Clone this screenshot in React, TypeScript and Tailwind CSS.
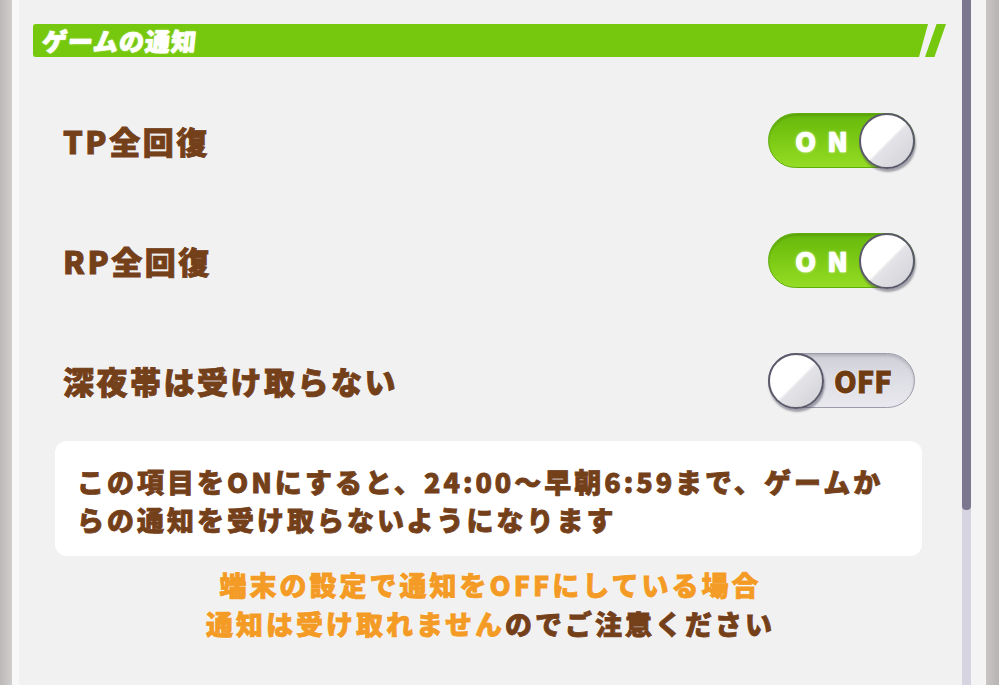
import React from 'react';

const font = { fontFamily: '"Noto Sans CJK JP", "Noto Sans", sans-serif' };

function Knob() {
  return (
    <div className="h-[56px] w-[56px] shrink-0 rounded-full border-[2px] border-[#5b5a6b] bg-[linear-gradient(135deg,#ffffff_0%,#ffffff_50%,#e4e4e8_54%,#cfcfd5_100%)] shadow-[1px_3px_2px_rgba(60,60,80,0.45)]" />
  );
}

function Toggle({ on }: { on: boolean }) {
  if (on) {
    return (
      <div className="relative h-[55px] w-[147px] rounded-full border border-[#5fae0c] bg-[linear-gradient(180deg,#66b80c_0%,#7fcc16_55%,#95dc25_100%)] shadow-[inset_0_2px_2px_rgba(0,0,0,0.12)]">
        <span className="absolute left-[26px] top-1/2 -translate-y-1/2 text-[27px] font-black leading-none tracking-[11px] text-white [-webkit-text-stroke:0.6px_#ffffff] [text-shadow:0_0_3px_#d9f7a8,0_0_1px_#c8f08a]">
          ON
        </span>
        <div className="absolute right-[-1px] top-[-1px]">
          <Knob />
        </div>
      </div>
    );
  }
  return (
    <div className="relative h-[55px] w-[147px] rounded-full border border-[#9d9cab] bg-[linear-gradient(180deg,#cfcfd8_0%,#dedee5_50%,#e8e8ee_100%)] shadow-[inset_0_2px_3px_rgba(0,0,0,0.15)]">
      <div className="absolute left-[-1px] top-[-1px]">
        <Knob />
      </div>
      <span className="absolute left-[65px] top-1/2 -translate-y-1/2 text-[29px] font-black leading-none text-[#6f3c12] [-webkit-text-stroke:0.8px_#6f3c12] [text-shadow:0_0_2px_#fff,0_0_2px_#fff,0_0_1px_#fff]">
        OFF
      </span>
    </div>
  );
}

function Row({ label, on }: { label: string; on: boolean }) {
  return (
    <div className="flex h-[120px] items-center justify-between pl-[44px] pr-[47px]">
      <span className="text-[31px] font-black leading-none tracking-[2.5px] text-[#74401a] [-webkit-text-stroke:0.9px_#74401a] [text-shadow:0_0_2px_#fff]">
        {label}
      </span>
      <Toggle on={on} />
    </div>
  );
}

export default function App() {
  return (
    <div className="flex h-[685px] w-[999px] overflow-hidden bg-[#f1f1f1]" style={font}>
      <div className="w-[12px] shrink-0 bg-[linear-gradient(90deg,#bdb9b9,#d0cdcd)]" />
      <div className="w-[7px] shrink-0 bg-[#f8f8f8]" />

      <div className="flex min-w-0 flex-1 flex-col bg-[#f1f1f1] pt-[24px]">
        {/* section header */}
        <div className="flex h-[33px] pl-[14px] pr-[16px]">
          <div className="flex flex-1 items-center rounded-l-[3px] bg-[#76c80e] pl-[9px] shadow-[0_0_0_1px_#dcf5b4] [clip-path:polygon(0_0,100%_0,calc(100%-9px)_100%,0_100%)]">
            <span className="inline-block -skew-x-6 text-[25px] font-black leading-none tracking-[1px] text-white [-webkit-text-stroke:0.7px_#ffffff] [text-shadow:0_0_2px_#e8ffc8]">
              ゲームの通知
            </span>
          </div>
          <div className="ml-[-3px] w-[21px] bg-[#76c80e] [clip-path:polygon(55%_0,100%_0,45%_100%,0_100%)]" />
        </div>

        <div className="mt-[23px]">
          <Row label="TP全回復" on />
          <Row label="RP全回復" on />
          <Row label="深夜帯は受け取らない" on={false} />
        </div>

        <div className="ml-[36px] mr-[40px] mt-[1px] rounded-[12px] bg-white pb-[17px] pl-[22px] pr-[10px] pt-[22px]">
          <p className="text-[27px] font-black leading-[38px] tracking-[3px] text-[#74401a] [-webkit-text-stroke:0.8px_#74401a]">
            この項目をONにすると、24:00～早朝6:59まで、ゲームか
            <br />
            らの通知を受け取らないようになります
          </p>
        </div>

        <div className="mt-[9px] text-center text-[27px] font-black leading-[39px] tracking-[3px] [text-shadow:0_0_2px_#fff,0_0_2px_#fff]">
          <p className="text-[#f39b25] [-webkit-text-stroke:0.8px_#f39b25]">端末の設定で通知をOFFにしている場合</p>
          <p>
            <span className="text-[#f39b25] [-webkit-text-stroke:0.8px_#f39b25]">通知は受け取れません</span>
            <span className="text-[#74401a] [-webkit-text-stroke:0.8px_#74401a]">のでご注意ください</span>
          </p>
        </div>
      </div>

      <div className="flex w-[9px] shrink-0 flex-col bg-[#d6d4e0]">
        <div className="h-[510px] rounded-b-[4px] bg-[#7c778e]" />
      </div>
      <div className="w-[15px] shrink-0 bg-[#f4f4f4]" />
      <div className="w-[13px] shrink-0 bg-[linear-gradient(90deg,#c9c5c5,#b9b4b4)]" />
    </div>
  );
}
